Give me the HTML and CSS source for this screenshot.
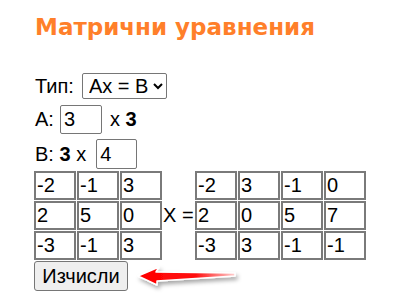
FILE: index.html
```html
<!doctype html>
<html lang="bg">
<head>
    <meta charset="UTF-8">
    <title>Матрични уравнения</title>
    <link rel="stylesheet" href="styles.css">
</head>
<body>
    <h3 class="title">Матрични уравнения</h3>

    <div class="row row-type">
        <label>Тип:</label>
        <select class="type">
            <option>Ax = B</option>
            <option>xA = B</option>
        </select>
    </div>

    <div class="row row-a">
        <label>A:</label>
        <input class="size" type="text" value="3">
        <span>x <b>3</b></span>
    </div>

    <div class="row row-b">
        <label>B: <b>3</b> x</label>
        <input class="size" type="text" value="4">
    </div>

    <div class="equation">
        <div class="matrix cols-3">
            <input class="cell" value="-2"><input class="cell" value="-1"><input class="cell" value="3">
            <input class="cell" value="2"><input class="cell" value="5"><input class="cell" value="0">
            <input class="cell" value="-3"><input class="cell" value="-1"><input class="cell" value="3">
        </div>
        <span class="sign">X =</span>
        <div class="matrix cols-4">
            <input class="cell" value="-2"><input class="cell" value="3"><input class="cell" value="-1"><input class="cell" value="0">
            <input class="cell" value="2"><input class="cell" value="0"><input class="cell" value="5"><input class="cell" value="7">
            <input class="cell" value="-3"><input class="cell" value="3"><input class="cell" value="-1"><input class="cell" value="-1">
        </div>
    </div>

    <div class="row row-submit">
        <button class="calc">Изчисли</button>
        <svg class="arrow" width="115" height="36" viewBox="0 0 115 36">
            <defs>
                <linearGradient id="arrowFill" x1="0" y1="0" x2="1" y2="0">
                    <stop offset="0" stop-color="#ff0000"/>
                    <stop offset="0.6" stop-color="#ff1010"/>
                    <stop offset="1" stop-color="#ffd0d0"/>
                </linearGradient>
                <filter id="shadow" x="-10%" y="-40%" width="130%" height="200%">
                    <feDropShadow dx="2" dy="3" stdDeviation="2" flood-color="#000" flood-opacity="0.35"/>
                </filter>
            </defs>
            <path d="M8 17 L29 8 L26 13 L105 14 L105 17 L27 22 L27 26 Z"
                  fill="url(#arrowFill)" stroke="#fff" stroke-width="1.5" stroke-linejoin="round"
                  filter="url(#shadow)"/>
        </svg>
    </div>
</body>
</html>
```

FILE: styles.css
```css
* {
    margin: 0;
    padding: 0;
    box-sizing: border-box;
}

body {
    padding: 0 35px;
    background: #fff;
    color: #000;
    font-family: "Liberation Sans", Arial, sans-serif;
    font-size: 20px;
}

.title {
    margin-top: 13px;
    font-family: "DejaVu Sans", Verdana, sans-serif;
    font-size: 23px;
    line-height: 28px;
    font-weight: bold;
    color: #ff7f2a;
}

.row {
    display: flex;
    align-items: center;
    gap: 6px;
}

.row-type {
    margin-top: 32px;
    height: 26px;
}

.row-a {
    margin-top: 6px;
    height: 29px;
}

.row-b {
    margin-top: 5px;
    height: 30px;
}

.type {
    width: 85px;
    height: 26px;
    font-family: "Liberation Sans", Arial, sans-serif;
    font-size: 20px;
    border: 1px solid #767676;
    border-radius: 2px;
    background: #fff;
    padding: 0 2px;
    margin-left: 2px;
}

.size {
    width: 42px;
    height: 29px;
    font-family: "Liberation Sans", Arial, sans-serif;
    font-size: 20px;
    border: 1px solid #767676;
    border-radius: 2px;
    padding: 0 3px;
}

.row-a .size {
    margin-right: 2px;
}

.row-b .size {
    margin-left: 4px;
    width: 41px;
    height: 30px;
}

.equation {
    margin-top: 2px;
    margin-left: -1px;
    display: flex;
    align-items: center;
}

.matrix {
    display: grid;
    gap: 1px;
}

.cols-3 {
    grid-template-columns: repeat(3, 42px);
}

.cols-4 {
    grid-template-columns: repeat(4, 42px);
}

.cell {
    width: 42px;
    height: 29px;
    border: 2px solid #7a7a7a;
    font-family: "Liberation Sans", Arial, sans-serif;
    font-size: 20px;
    padding: 0 1px;
}

.sign {
    width: 33px;
    padding-left: 1px;
}

.row-submit {
    margin-top: 1px;
    margin-left: -1px;
    gap: 2px;
    align-items: flex-start;
}

.calc {
    width: 94px;
    height: 30px;
    font-family: "Liberation Sans", Arial, sans-serif;
    font-size: 20px;
    background: #efefef;
    border: 1px solid #767676;
    border-radius: 3px;
}

.arrow {
    margin-top: -2px;
}
```
